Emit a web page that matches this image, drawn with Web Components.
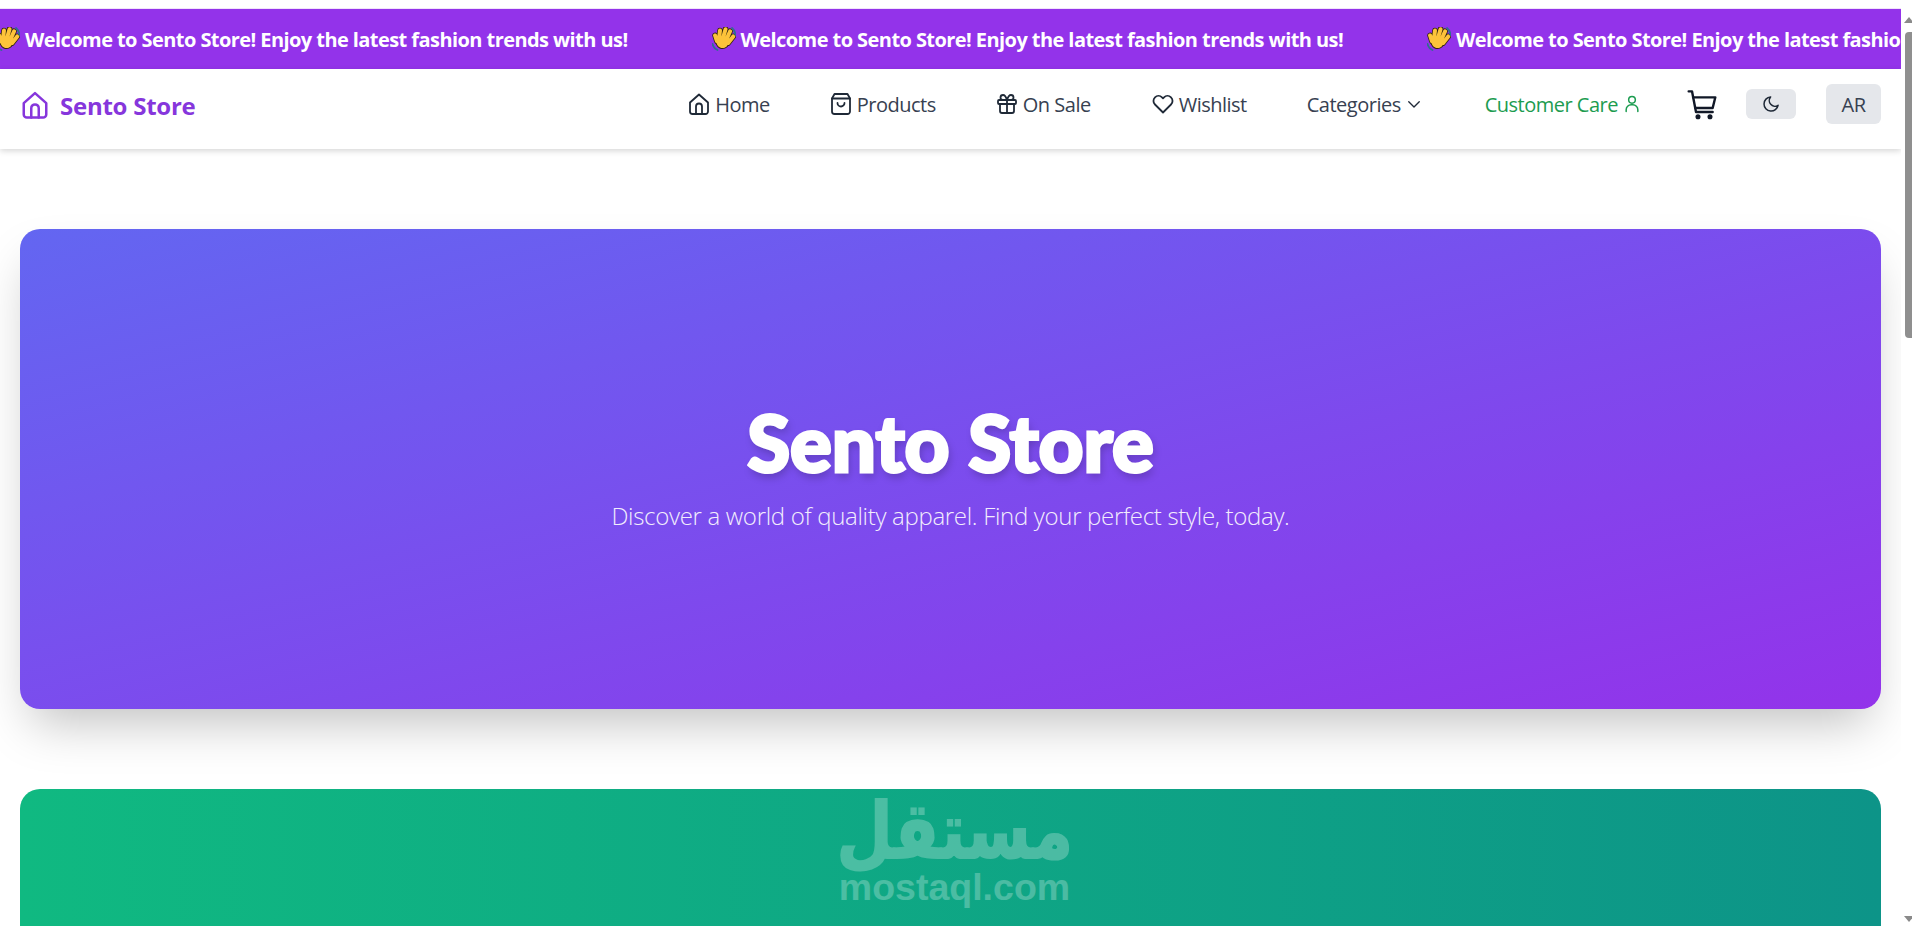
<!DOCTYPE html>
<html lang="en">
<head>
<meta charset="utf-8">
<title>Sento Store</title>
<style>
    html, body { margin: 0; height: 926px; overflow: hidden; background: #fff; }
    body { font-family: "Open Sans", "Noto Sans", sans-serif; }
</style>
</head>
<body>
<store-page>
    <promo-ticker>Welcome to Sento Store! Enjoy the latest fashion trends with us!</promo-ticker>
    <store-nav></store-nav>
    <hero-banner title-text="Sento Store" subtitle="Discover a world of quality apparel. Find your perfect style, today."></hero-banner>
    <promo-panel></promo-panel>
</store-page>
<script>
const ICONS = {
    home: '<path d="M3 10.500 12 2.500l9 8V19.500a2.500 2.500 0 0 1-2.500 2.500H5.500A2.500 2.500 0 0 1 3 19.500z"/><path d="M9 22v-7.500a3 3 0 0 1 6 0V22"/>',
    bag: '<path d="M5.500 2h13L21 6.500V19.500a2.500 2.500 0 0 1-2.500 2.500h-13A2.500 2.500 0 0 1 3 19.500V6.500z"/><path d="M3 6.500h18"/><path d="M8.500 11a3.500 3.500 0 0 0 7 0"/>',
    gift: '<rect x="3" y="8" width="18" height="4" rx="1"/><path d="M5 12v7a2 2 0 0 0 2 2h10a2 2 0 0 0 2-2v-7"/><path d="M12 8v13"/><path d="M12 8H8a2.500 2.500 0 1 1 0-5c2.500 0 4 5 4 5s1.500-5 4-5a2.500 2.500 0 1 1 0 5z"/>',
    heart: '<path d="M12 20.500 4 12.500a5 5 0 0 1 0-7.200 5 5 0 0 1 7 0l1 1 1-1a5 5 0 0 1 7 0 5 5 0 0 1 0 7.200z"/>',
    chevron: '<path d="m5 9 7 7 7-7"/>',
    user: '<circle cx="12" cy="7" r="4"/><path d="M5 21v-2a6 6 0 0 1 6-6h2a6 6 0 0 1 6 6v2"/>',
    cart: '<path d="M2 2.500h2.500L7.500 18H20"/><path d="M5.300 7H22l-2 8H7"/><circle cx="9" cy="21.500" r="1" fill="currentColor"/><circle cx="18" cy="21.500" r="1" fill="currentColor"/>',
    moon: '<path d="M11.500 3.500a8.500 8.500 0 1 0 9 10 6.800 6.800 0 0 1-9-10z"/>'
};

class StoreIcon extends HTMLElement {
    connectedCallback() {
        const size = this.getAttribute("size") || 24;
        const weight = this.getAttribute("weight") || 1.8;
        this.attachShadow({ mode: "open" });
        this.shadowRoot.innerHTML = `
            <style>:host { display: inline-flex; flex: none; }</style>
            <svg width="${size}" height="${size}" viewBox="0 0 24 24" fill="none" stroke="currentColor"
                 stroke-width="${weight}" stroke-linecap="round" stroke-linejoin="round">${ICONS[this.getAttribute("name")]}</svg>`;
    }
}
customElements.define("store-icon", StoreIcon);

class StorePage extends HTMLElement {
    constructor() {
        super();
        this.attachShadow({ mode: "open" });
        this.shadowRoot.innerHTML = `
            <style>
                :host { display: flex; height: 926px; overflow: hidden; }
                .content { flex: 1; min-width: 0; height: 926px; overflow: hidden; padding-top: 9px; box-sizing: border-box; }
                .bar { width: 11px; flex: none; background: #fff; display: flex; flex-direction: column; align-items: flex-end; overflow: hidden; }
                .arrow { width: 0; height: 0; border-left: 5px solid transparent; border-right: 5px solid transparent; margin-right: -2px; flex: none; }
                .up { border-bottom: 6px solid #8a8a8a; margin-top: 17px; margin-bottom: 9px; }
                .down { border-top: 6px solid #8a8a8a; margin-top: 5px; margin-bottom: 4px; }
                .track { flex: 1; }
                .thumb { width: 7px; height: 306px; background: #8f8f8f; border-radius: 4px 0 0 4px; }
            </style>
            <div class="content"><slot></slot></div>
            <div class="bar">
                <div class="arrow up"></div>
                <div class="track"><div class="thumb"></div></div>
                <div class="arrow down"></div>
            </div>`;
    }
}
customElements.define("store-page", StorePage);

class PromoTicker extends HTMLElement {
    constructor() {
        super();
        this.attachShadow({ mode: "open" });
        const hand = `<svg class="hand" width="24" height="24" viewBox="0 0 24 24" fill="none" stroke-linecap="round">
            <g transform="rotate(24 12 13)">
                <g stroke="#33250f" stroke-width="5.600"><path d="M7 14 4.500 6M10.500 13 9 2.500M14 13V2.500M17 14l2-8M6 17l-4-4.500"/></g>
                <circle cx="11.500" cy="15.500" r="7" fill="#33250f"/>
                <g stroke="#fdc33a" stroke-width="4"><path d="M7 14 4.500 6M10.500 13 9 2.500M14 13V2.500M17 14l2-8M6 17l-4-4.500"/></g>
                <circle cx="11.500" cy="15.500" r="6" fill="#fdc33a"/>
            </g>
            <path d="M20 1q3 2.500 3.500 7M.5 17q1 4.500 5 6" stroke="#2f6f8f" stroke-width="1.800"/></svg>`;
        const item = `<span class="item">${hand}<span class="text"><slot></slot></span></span>`;
        const copy = `<span class="item">${hand}<span class="text">${this.textContent}</span></span>`;
        this.shadowRoot.innerHTML = `
            <style>
                :host { display: block; height: 60px; background: #9333ea; overflow: hidden; color: #fff; box-shadow: 0 -1px 0 #f1e2fb; }
                .track { display: flex; height: 60px; align-items: center; gap: 84px; transform: translateX(-4px); white-space: nowrap; }
                .item { display: inline-flex; align-items: center; gap: 5px; flex: none; }
                .hand { flex: none; }
                .text { font-size: 20px; font-weight: 700; letter-spacing: -.57px; }
            </style>
            <div class="track">${item}${copy}${copy}</div>`;
    }
}
customElements.define("promo-ticker", PromoTicker);

class NavLink extends HTMLElement {
    constructor() {
        super();
        this.attachShadow({ mode: "open" });
        this.shadowRoot.innerHTML = `
            <style>
                :host { display: inline-flex; align-items: center; gap: 4px; font-size: 20px; letter-spacing: -.5px; color: var(--link, #374151); white-space: nowrap; }
            </style>
            <slot></slot>`;
    }
}
customElements.define("nav-link", NavLink);

class StoreNav extends HTMLElement {
    constructor() {
        super();
        this.attachShadow({ mode: "open" });
        this.shadowRoot.innerHTML = `
            <style>
                :host { display: flex; align-items: center; height: 80px; padding: 0 20px 10px; background: #fff;
                        box-shadow: 0 2px 6px rgba(0,0,0,.16); position: relative; box-sizing: border-box; }
                .brand { display: flex; align-items: center; gap: 10px; margin-top: 2px; color: #8636dc; font-size: 24px; font-weight: 700; letter-spacing: -.25px; }
                .links { margin-left: auto; display: flex; align-items: center; }
                nav-link { margin-left: 60px; }
                nav-link:first-child { margin-left: 0; }
                nav-link:nth-child(2), nav-link:nth-child(3) { margin-left: 59px; }
                nav-link store-icon { color: #1f2937; }
                nav-link.care { --link: #1c9c50; margin-left: 62px; }
                nav-link.care store-icon { color: #1c9c50; }
                .cart { display: flex; margin-left: 44px; color: #111827; }
                .moon { width: 50px; height: 30px; border-radius: 6px; background: #e5e7eb; margin-left: 28px; display: flex; align-items: center; justify-content: center; color: #1f2937; }
                .lang { width: 55px; height: 40px; border-radius: 6px; background: #e5e7eb; margin-left: 30px; display: flex; align-items: center; justify-content: center; font-size: 20px; letter-spacing: -.5px; color: #374151; }
            </style>
            <div class="brand"><store-icon name="home" size="30" weight="2"></store-icon><span>Sento Store</span></div>
            <div class="links">
                <nav-link><store-icon name="home"></store-icon>Home</nav-link>
                <nav-link><store-icon name="bag"></store-icon>Products</nav-link>
                <nav-link><store-icon name="gift"></store-icon>On Sale</nav-link>
                <nav-link><store-icon name="heart"></store-icon>Wishlist</nav-link>
                <nav-link>Categories<store-icon name="chevron" size="18"></store-icon></nav-link>
                <nav-link class="care">Customer Care<store-icon name="user" size="20"></store-icon></nav-link>
                <span class="cart"><store-icon name="cart" size="32"></store-icon></span>
                <span class="moon"><store-icon name="moon" size="20"></store-icon></span>
                <span class="lang">AR</span>
            </div>`;
    }
}
customElements.define("store-nav", StoreNav);

class HeroBanner extends HTMLElement {
    constructor() {
        super();
        this.attachShadow({ mode: "open" });
        this.shadowRoot.innerHTML = `
            <style>
                :host { display: flex; flex-direction: column; align-items: center; justify-content: center; height: 480px;
                        margin: 80px 20px; padding-bottom: 9px; box-sizing: border-box; border-radius: 20px; color: #fff;
                        background: linear-gradient(165deg, #6366f1, #9333ea);
                        box-shadow: 0 25px 50px -12px rgba(0,0,0,.25); }
                h1 { margin: 0; font-family: Lato, "Open Sans", sans-serif; font-size: 78px; font-weight: 900; line-height: 90px;
                     -webkit-text-stroke: 3px #fff; text-shadow: 2px 5px 8px rgba(0,0,0,.22); }
                p { margin: 12px 0 0; font-size: 24px; font-weight: 300; letter-spacing: -.31px; opacity: .9; }
            </style>
            <h1></h1><p></p>`;
    }
    connectedCallback() {
        this.shadowRoot.querySelector("h1").textContent = this.getAttribute("title-text");
        this.shadowRoot.querySelector("p").textContent = this.getAttribute("subtitle");
    }
}
customElements.define("hero-banner", HeroBanner);

class PromoPanel extends HTMLElement {
    constructor() {
        super();
        this.attachShadow({ mode: "open" });
        this.shadowRoot.innerHTML = `
            <style>
                :host { display: block; height: 400px; margin: 0 20px; border-radius: 20px 20px 0 0;
                        background: linear-gradient(90deg, #10b981, #0d9488); position: relative; }
                .mark { position: absolute; top: 13px; left: 50%; margin-left: 4px; transform: translateX(-50%); display: flex; flex-direction: column; align-items: center;
                        color: #fff; opacity: .25; width: 240px; }
                .ar { display: inline-block; font-family: "DejaVu Sans", sans-serif; font-weight: 700; font-size: 66px; line-height: 60px; margin-bottom: 6px; -webkit-text-stroke: 1.500px #fff; transform: scale(.98, 1.18); }
                .en { font-family: "Liberation Sans", sans-serif; font-weight: 700; font-size: 37.500px; line-height: 38px; }
            </style>
            <div class="mark"><span class="ar" dir="rtl" lang="ar">مستقل</span><span class="en">mostaql.com</span></div>`;
    }
}
customElements.define("promo-panel", PromoPanel);
</script>
</body>
</html>
